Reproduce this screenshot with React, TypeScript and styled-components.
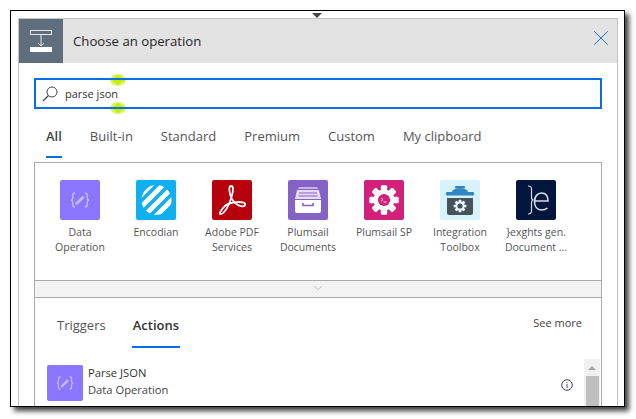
import React from "react";
import styled, { createGlobalStyle } from "styled-components";
import { ChevronDown, X } from "lucide-react";

const GlobalStyle = createGlobalStyle`
  html, body {
    margin: 0;
    padding: 0;
    background: #fff;
    font-family: "Open Sans", "Noto Sans", sans-serif;
    color: #333;
  }
`;

const Page = styled.div`
  width: 636px;
  height: 419px;
  padding: 10px 0 0 10px;
  box-sizing: border-box;
  overflow: hidden;
`;

const FrameShadow = styled.div`
  width: 615px;
  height: 397px;
  box-shadow: 4px 4px 5px rgba(0, 0, 0, 0.75);
`;

const Frame = styled.div`
  position: relative;
  width: 615px;
  height: 397px;
  box-sizing: border-box;
  border: 1px solid #000;
  padding: 7px 6px 0 7px;
  background: #fff;
  overflow: hidden;
`;

const Pointer = styled.div`
  position: absolute;
  left: 301px;
  top: 2px;
  width: 0;
  height: 0;
  border-left: 5px solid transparent;
  border-right: 5px solid transparent;
  border-top: 5px solid #444;
`;

const Card = styled.div`
  height: 400px;
  box-sizing: border-box;
  border: 1px solid #c4c4c4;
  border-bottom: 0;
`;

const Header = styled.div`
  display: flex;
  align-items: center;
  height: 44px;
  background: #e3e3e3;
`;

const HeaderTile = styled.div`
  display: flex;
  align-items: center;
  justify-content: center;
  width: 44px;
  height: 44px;
  background: #5f6e7d;
`;

const HeaderTitle = styled.div`
  flex: 1;
  margin-left: 10px;
  font-size: 13.2px;
  color: #252525;
`;

const CloseButton = styled.div`
  display: flex;
  margin: -6px 3px 0 0;
  color: #0f6fe0;
`;

const Body = styled.div`
  padding: 15px 15px 0;
`;

const SearchBox = styled.div`
  position: relative;
  display: flex;
  align-items: center;
  gap: 7px;
  height: 31px;
  box-sizing: border-box;
  border: 2px solid #0a6fe6;
  padding: 0 0 0 6px;
  font-size: 11px;
  color: #333;
`;

const Mark = styled.svg<{ $top: number }>`
  position: absolute;
  left: 74px;
  top: ${(p) => p.$top}px;
`;

const Tabs = styled.div`
  display: flex;
  gap: 28px;
  margin: 9px 0 0 12px;
  height: 40px;
`;

const Tab = styled.div<{ $active?: boolean }>`
  position: relative;
  padding-top: 9px;
  font-size: 13px;
  font-weight: ${(p) => (p.$active ? 600 : 400)};
  color: ${(p) => (p.$active ? "#444" : "#555")};
  ${(p) =>
    p.$active &&
    `&::after {
      content: "";
      position: absolute;
      left: 0;
      right: 0;
      bottom: 0;
      height: 2px;
      background: #0a6fe6;
    }`}
`;

const Panel = styled.div`
  margin-top: 4px;
  border: 1px solid #aaa;
  border-bottom: 0;
  height: 300px;
`;

const ConnectorGrid = styled.div`
  display: flex;
  height: 117px;
  padding: 17px 0 0 7px;
  box-sizing: border-box;
`;

const Connector = styled.div`
  display: flex;
  flex-direction: column;
  align-items: center;
  width: 76px;
`;

const Tile = styled.div<{ $bg: string; $size?: number }>`
  display: flex;
  align-items: center;
  justify-content: center;
  flex: none;
  width: ${(p) => p.$size ?? 40}px;
  height: ${(p) => p.$size ?? 40}px;
  border-radius: 2px;
  background: ${(p) => p.$bg};
  overflow: hidden;
`;

const ConnectorName = styled.div`
  margin-top: 5px;
  width: 76px;
  font-size: 10.5px;
  line-height: 15px;
  text-align: center;
  color: #555;
  white-space: pre-line;
`;

const ExpandBar = styled.div`
  display: flex;
  justify-content: center;
  height: 16px;
  background: #f3f3f3;
  border-top: 1px solid #aaa;
  border-bottom: 1px solid #aaa;
  color: #999;
`;

const ResultTabs = styled.div`
  display: flex;
  align-items: flex-start;
  height: 50px;
  padding: 0 19px 0 22px;
`;

const ResultTab = styled.div<{ $active?: boolean }>`
  position: relative;
  height: 50px;
  box-sizing: border-box;
  margin-right: 27px;
  padding-top: 18px;
  font-size: 13px;
  font-weight: ${(p) => (p.$active ? 600 : 400)};
  color: ${(p) => (p.$active ? "#333" : "#555")};
  ${(p) =>
    p.$active &&
    `&::after {
      content: "";
      position: absolute;
      left: -1px;
      right: -1px;
      bottom: 0;
      height: 2px;
      background: #0a6fe6;
    }`}
`;

const SeeMore = styled.div`
  margin-left: auto;
  padding-top: 17px;
  font-size: 11px;
  color: #444;
`;

const ResultRow = styled.div`
  position: relative;
  display: flex;
  gap: 5px;
  margin-top: 17px;
  padding-left: 12px;
`;

const ResultText = styled.div`
  font-size: 11.2px;
  line-height: 16.5px;
  color: #444;
`;

const ResultName = styled.div`
  color: #333;
`;

const InfoBadge = styled.svg`
  position: absolute;
  left: 526px;
  top: 14px;
`;

const Scrollbar = styled.div`
  position: absolute;
  right: 1px;
  top: -6px;
  width: 16px;
  height: 60px;
  display: flex;
  flex-direction: column;
  align-items: center;
  background: #f1f1f1;
`;

const ScrollArrow = styled.div`
  margin: 7px 0 6px;
  width: 0;
  height: 0;
  border-left: 4px solid transparent;
  border-right: 4px solid transparent;
  border-bottom: 4px solid #a6a6a6;
`;

const ScrollThumb = styled.div`
  flex: 1;
  width: 13px;
  background: #bfbfbf;
`;

function DataOperationIcon({ size }: { size: number }) {
  return (
    <svg width={size} height={size} viewBox="0 0 40 40" fill="none">
      <g stroke="#c4baff" strokeWidth="1.4">
        <path d="M15 13c-1.800 0-2.200.8-2.200 2.500v2.300c0 1.400-.6 2-1.800 2.200 1.200.3 1.800.9 1.800 2.200v2.300c0 1.700.4 2.500 2.200 2.500" />
        <path d="M25 13c1.800 0 2.200.8 2.200 2.500v2.300c0 1.400.6 2 1.800 2.200-1.200.3-1.800.9-1.800 2.200v2.300c0 1.700-.4 2.500-2.200 2.500" />
      </g>
      <path d="M22.500 15.800l2 2-6.500 6.500-2.800.7.700-2.800z" fill="#c4baff" />
    </svg>
  );
}

function EncodianIcon() {
  return (
    <svg width="40" height="40" viewBox="0 0 40 40">
      <defs>
        <clipPath id="enc">
          <circle cx="20.500" cy="20" r="15" />
        </clipPath>
      </defs>
      <g clipPath="url(#enc)" stroke="#fff" strokeWidth="4.800">
        <path d="M-2 22L22 -2M4 28L28 4M10 34L34 10M16 40L40 16" />
      </g>
    </svg>
  );
}

function AdobeIcon() {
  return (
    <svg width="40" height="40" viewBox="0 0 40 40" fill="none">
      <path
        d="M19 6c-2 0-2 4-1 8 1 4 4 9 8 11 3 1.500 6 2 7 0 1-2-2-3-6-3-6 0-13 2-16 6-2 3-4 5-3 6 2 1 6-3 9-10 2-5 4-11 4-15 0-2-1-3-2-3z"
        stroke="#fff"
        strokeWidth="1.800"
        strokeLinejoin="round"
      />
    </svg>
  );
}

function DrawerIcon() {
  return (
    <svg width="40" height="40" viewBox="0 0 40 40">
      <path d="M11 7h18l1 2H10z" fill="#c9b4e8" />
      <path d="M9 10h22l2 9H7z" fill="#e6dcf5" />
      <path d="M11 13h18M10.500 16h19" stroke="#8562c6" strokeWidth="1" />
      <path d="M7 20h26v11a2 2 0 0 1-2 2H9a2 2 0 0 1-2-2z" fill="#fff" />
      <path d="M15 23v2.500h10V23" fill="none" stroke="#8562c6" strokeWidth="1.600" />
    </svg>
  );
}

function GearIcon({ fill, hole, r }: { fill: string; hole: string; r: number }) {
  const teeth = [0, 45, 90, 135, 180, 225, 270, 315];
  return (
    <g>
      {teeth.map((a) => (
        <rect
          key={a}
          x={-r * 0.3}
          y={-r * 1.4}
          width={r * 0.6}
          height={r * 0.6}
          rx={r * 0.12}
          fill={fill}
          transform={`rotate(${a})`}
        />
      ))}
      <circle r={r} fill={fill} />
      <circle r={r * 0.58} fill={hole} />
    </g>
  );
}

function PlumsailSpIcon() {
  return (
    <svg width="40" height="40" viewBox="0 0 40 40">
      <g transform="translate(20 20)">
        <GearIcon fill="#fff" hole="#d3217b" r={10.500} />
      </g>
      <path d="M17 18l2 1.600-2 1.600M19.500 22h3" stroke="#fff" strokeWidth="0.800" fill="none" />
    </svg>
  );
}

function ToolboxIcon() {
  return (
    <svg width="40" height="40" viewBox="0 0 40 40">
      <path d="M12 12c1-5 15-5 16 0z" fill="#2f86c3" />
      <rect x="15" y="6" width="10" height="2.500" rx="1" fill="#2f86c3" />
      <rect x="6" y="12" width="28" height="3.500" rx="1" fill="#2f86c3" />
      <path d="M7 18h26v15a2 2 0 0 1-2 2H9a2 2 0 0 1-2-2z" fill="#47525b" />
      <g transform="translate(20 26)">
        <GearIcon fill="#e6f4fb" hole="#47525b" r={4.500} />
      </g>
    </svg>
  );
}

function ExghtsIcon() {
  return (
    <svg width="40" height="40" viewBox="0 0 40 40" fill="none" stroke="#d7dde8">
      <path d="M12 6c2.500 0 3.500 1 3.500 3v8c0 2 .5 3 2 3-1.500 0-2 1-2 3v8c0 2-1 3-3.500 3" strokeWidth="1.200" />
      <path d="M19 21h13c0-5-2.500-8-6.500-8S18.500 16.500 18.500 21.500 21 30 25.500 30c2.500 0 4.500-.8 6-2" strokeWidth="1.600" />
    </svg>
  );
}

const connectors = [
  { name: "Data\nOperation", bg: "#8a76ff", icon: <DataOperationIcon size={40} /> },
  { name: "Encodian", bg: "#10aff0", icon: <EncodianIcon /> },
  { name: "Adobe PDF\nServices", bg: "#b7000e", icon: <AdobeIcon /> },
  { name: "Plumsail\nDocuments", bg: "#8562c6", icon: <DrawerIcon /> },
  { name: "Plumsail SP", bg: "#d3217b", icon: <PlumsailSpIcon /> },
  { name: "Integration\nToolbox", bg: "#d5f2fd", icon: <ToolboxIcon /> },
  { name: "}exghts gen.\nDocument ...", bg: "#02153c", icon: <ExghtsIcon /> },
];

const tabs = ["All", "Built-in", "Standard", "Premium", "Custom", "My clipboard"];

function GreenMark({ top, lineY }: { top: number; lineY: number }) {
  return (
    <Mark $top={top} width="16" height="12" viewBox="0 0 16 12">
      <ellipse cx="8" cy="6" rx="8" ry="6" fill="#d9f56a" />
      <path d="M1 6l7-5 7 5-7 5z" fill="#c6f000" />
      <rect x="0" y={lineY} width="16" height="2" fill="#0a6fe6" />
    </Mark>
  );
}

export default function App() {
  return (
    <>
      <GlobalStyle />
      <Page>
        <FrameShadow>
          <Frame>
            <Pointer />
            <Card>
              <Header>
                <HeaderTile>
                  <svg width="22" height="22" viewBox="0 0 22 22" fill="none">
                    <rect x="0.500" y="0.500" width="21" height="4" stroke="#e6e9ec" />
                    <path d="M11 5v11M8 13l3 3 3-3" stroke="#e6e9ec" />
                    <rect x="0" y="17" width="22" height="5" fill="#fff" />
                  </svg>
                </HeaderTile>
                <HeaderTitle>Choose an operation</HeaderTitle>
                <CloseButton>
                  <X size={26} strokeWidth={0.9} />
                </CloseButton>
              </Header>
              <Body>
                <SearchBox>
                  <svg width="16" height="16" viewBox="0 0 16 16" fill="none" stroke="#444">
                    <circle cx="10" cy="6" r="5" />
                    <path d="M6.500 9.500L1 15" strokeWidth="1.200" />
                  </svg>
                  parse json
                  <GreenMark top={-6} lineY={4} />
                  <GreenMark top={22} lineY={5} />
                </SearchBox>
                <Tabs>
                  {tabs.map((t) => (
                    <Tab key={t} $active={t === "All"}>
                      {t}
                    </Tab>
                  ))}
                </Tabs>
                <Panel>
                  <ConnectorGrid>
                    {connectors.map((c) => (
                      <Connector key={c.name}>
                        <Tile $bg={c.bg}>{c.icon}</Tile>
                        <ConnectorName>{c.name}</ConnectorName>
                      </Connector>
                    ))}
                  </ConnectorGrid>
                  <ExpandBar>
                    <ChevronDown size={14} strokeWidth={1} />
                  </ExpandBar>
                  <ResultTabs>
                    <ResultTab>Triggers</ResultTab>
                    <ResultTab $active>Actions</ResultTab>
                    <SeeMore>See more</SeeMore>
                  </ResultTabs>
                  <ResultRow>
                    <Tile $bg="#8a76ff" $size={36}>
                      <DataOperationIcon size={36} />
                    </Tile>
                    <ResultText>
                      <ResultName>Parse JSON</ResultName>
                      Data Operation
                    </ResultText>
                    <InfoBadge width="12" height="12" viewBox="0 0 12 12" fill="none">
                      <circle cx="6" cy="6" r="5.300" stroke="#445" />
                      <path d="M6 5v4M6 3v1" stroke="#80305f" />
                    </InfoBadge>
                    <Scrollbar>
                      <ScrollArrow />
                      <ScrollThumb />
                    </Scrollbar>
                  </ResultRow>
                </Panel>
              </Body>
            </Card>
          </Frame>
        </FrameShadow>
      </Page>
    </>
  );
}
